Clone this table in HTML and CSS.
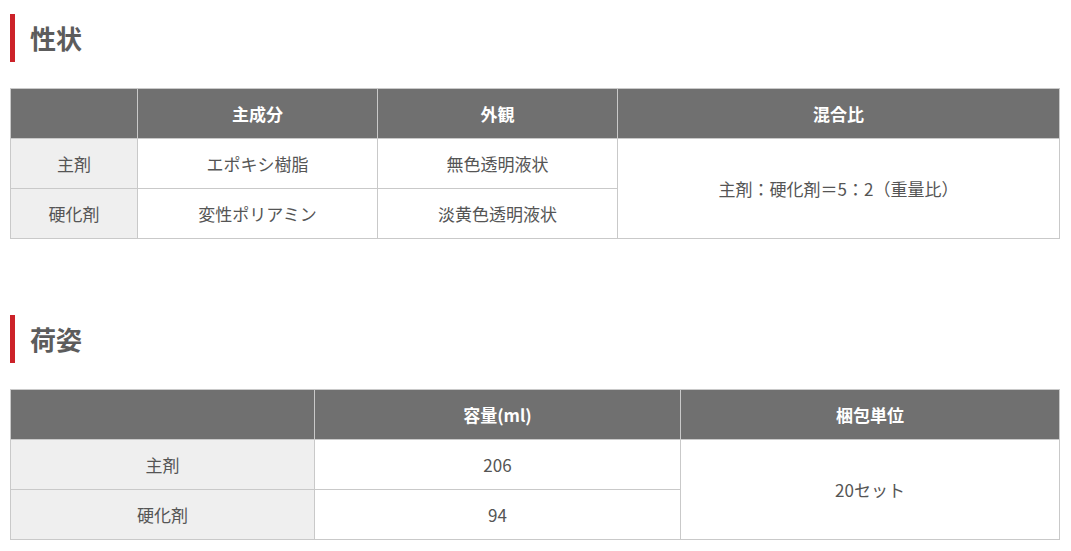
FILE: index.html
```html
<!DOCTYPE html>
<html lang="ja">
<head>
<meta charset="utf-8">
<link rel="stylesheet" href="styles.css">
</head>
<body>
<section class="sec">
  <h2 class="title">性状</h2>
  <table class="spec t1">
    <colgroup><col class="c1a"><col class="c1b"><col class="c1c"><col class="c1d"></colgroup>
    <thead>
      <tr><th></th><th>主成分</th><th>外観</th><th>混合比</th></tr>
    </thead>
    <tbody>
      <tr><td class="lab">主剤</td><td>エポキシ樹脂</td><td>無色透明液状</td><td rowspan="2">主剤：硬化剤＝5：2（重量比）</td></tr>
      <tr><td class="lab">硬化剤</td><td>変性ポリアミン</td><td>淡黄色透明液状</td></tr>
    </tbody>
  </table>
</section>
<section class="sec sec2">
  <h2 class="title">荷姿</h2>
  <table class="spec t2">
    <colgroup><col class="c2a"><col class="c2b"><col class="c2c"></colgroup>
    <thead>
      <tr><th></th><th>容量(ml)</th><th>梱包単位</th></tr>
    </thead>
    <tbody>
      <tr><td class="lab">主剤</td><td>206</td><td rowspan="2">20セット</td></tr>
      <tr><td class="lab">硬化剤</td><td>94</td></tr>
    </tbody>
  </table>
</section>
</body>
</html>
```
FILE: styles.css
```css
html, body {
  margin: 0;
  padding: 0;
  background: #fff;
}
body {
  padding: 14px 11px 0 10px;
  font-family: "Noto Sans CJK JP", "Noto Sans", sans-serif;
  color: #555;
}
.sec2 {
  margin-top: 76px;
}
.title {
  margin: 0 0 26px;
  height: 48px;
  line-height: 48px;
  border-left: 5px solid #cc2229;
  padding-left: 15px;
  font-size: 26px;
  font-weight: bold;
  color: #5c5c5c;
}
.spec {
  width: 100%;
  table-layout: fixed;
  border-collapse: collapse;
  font-size: 17px;
}
.spec th, .spec td {
  border: 1px solid #c9c9c9;
  height: 49px;
  padding: 0;
  text-align: center;
  vertical-align: middle;
  line-height: 1.4;
}
.spec th {
  background: #707070;
  color: #fff;
  font-weight: bold;
}
.spec td {
  background: #fff;
}
.spec td.lab {
  background: #efefef;
}
.c1a { width: 127px; }
.c1b { width: 240px; }
.c1c { width: 240px; }
.c1d { width: auto; }
.c2a { width: 304px; }
.c2b { width: 366px; }
.c2c { width: auto; }
```
